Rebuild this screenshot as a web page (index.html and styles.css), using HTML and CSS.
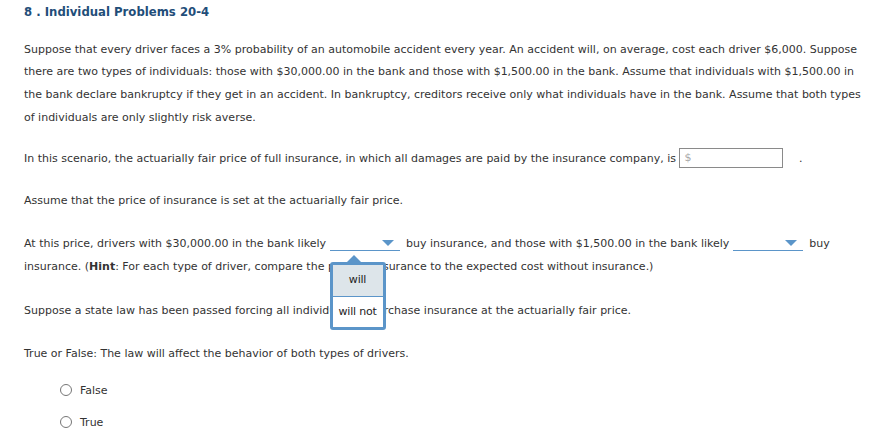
FILE: index.html
```html
<!DOCTYPE html>
<html>
<head>
<meta charset="utf-8">
<link rel="stylesheet" href="styles.css">
</head>
<body>
<div class="page">
  <h1 class="title">8 . Individual Problems 20-4</h1>
  <p class="para p1">Suppose that every driver faces a 3% probability of an automobile accident every year. An accident will, on average, cost each driver $6,000. Suppose there are two types of individuals: those with $30,000.00 in the bank and those with $1,500.00 in the bank. Assume that individuals with $1,500.00 in the bank declare bankruptcy if they get in an accident. In bankruptcy, creditors receive only what individuals have in the bank. Assume that both types of individuals are only slightly risk averse.</p>
  <p class="para p2">In this scenario, the actuarially fair price of full insurance, in which all damages are paid by the insurance company, is <span class="input"><span class="dollar">$</span></span> <span class="dot">.</span></p>
  <p class="para p3">Assume that the price of insurance is set at the actuarially fair price.</p>
  <p class="para p4">At this price, drivers with $30,000.00 in the bank likely <span class="select"><span class="caret"></span><span class="popup"><span class="opt opt-sel">will</span><span class="opt">will not</span></span></span> buy insurance, and those with $1,500.00 in the bank likely <span class="select"><span class="caret"></span></span> buy insurance. (<b>Hint</b>: For each type of driver, compare the price of insurance to the expected cost without insurance.)</p>
  <p class="para p5">Suppose a state law has been passed forcing all individuals to purchase insurance at the actuarially fair price.</p>
  <p class="para p6">True or False: The law will affect the behavior of both types of drivers.</p>
  <div class="options">
    <label class="radio"><span class="circle"></span>False</label>
    <label class="radio"><span class="circle"></span>True</label>
  </div>
</div>
</body>
</html>
```
FILE: styles.css
```css
html, body {
  margin: 0;
  padding: 0;
  background: #ffffff;
}
.page {
  padding: 1px 18px 0 24px;
  font-family: "DejaVu Sans", Verdana, sans-serif;
  font-size: 11px;
  color: #333333;
}
.title {
  margin: 0;
  font-size: 11.7px;
  line-height: 22px;
  font-weight: bold;
  color: #1f4e79;
}
.para {
  margin: 0;
  line-height: 22.7px;
}
.p1 { margin-top: 15.6px; }
.p2 { margin-top: 18.6px; }
.p3 { margin-top: 19.3px; }
.p4 { margin-top: 20.3px; }
.p5 { margin-top: 21.3px; }
.p6 { margin-top: 20.3px; }
.input {
  display: inline-block;
  vertical-align: middle;
  box-sizing: border-box;
  width: 104px;
  height: 20px;
  border: 1px solid #8a8a8a;
  line-height: 18px;
  padding-left: 4px;
  margin-top: -3px;
}
.dollar {
  color: #a8a8a8;
}
.dot {
  margin-left: 12px;
}
.select {
  position: relative;
  display: inline-block;
  vertical-align: -4px;
  width: 70px;
  height: 13px;
  border-bottom: 1px solid #5b95c9;
  margin: 0 3px 0 0;
}
.caret {
  position: absolute;
  right: 6px;
  top: 3px;
  width: 0;
  height: 0;
  border-left: 6px solid transparent;
  border-right: 6px solid transparent;
  border-top: 6px solid #5b95c9;
}
.popup {
  position: absolute;
  left: 0;
  top: 25px;
  width: 56px;
  box-sizing: border-box;
  border: 3px solid #5b95c9;
  border-radius: 3px;
  background: #ffffff;
  display: flex;
  flex-direction: column;
  z-index: 5;
}
.popup::before {
  content: "";
  position: absolute;
  left: 14px;
  top: -10px;
  border-left: 7px solid transparent;
  border-right: 7px solid transparent;
  border-bottom: 7px solid #5b95c9;
}
.opt {
  display: flex;
  align-items: center;
  justify-content: center;
  height: 30px;
  color: #222222;
  white-space: nowrap;
  letter-spacing: -0.2px;
}
.opt-sel {
  background: #dde5ea;
  border-bottom: 1px solid #5b95c9;
  height: 31px;
}
.options {
  margin-top: 14px;
  padding-left: 36px;
  display: flex;
  flex-direction: column;
  gap: 10px;
}
.radio {
  display: flex;
  align-items: center;
  height: 22px;
}
.circle {
  display: inline-block;
  box-sizing: border-box;
  width: 12px;
  height: 12px;
  border: 1px solid #767676;
  border-radius: 50%;
  margin-right: 8px;
}
```
